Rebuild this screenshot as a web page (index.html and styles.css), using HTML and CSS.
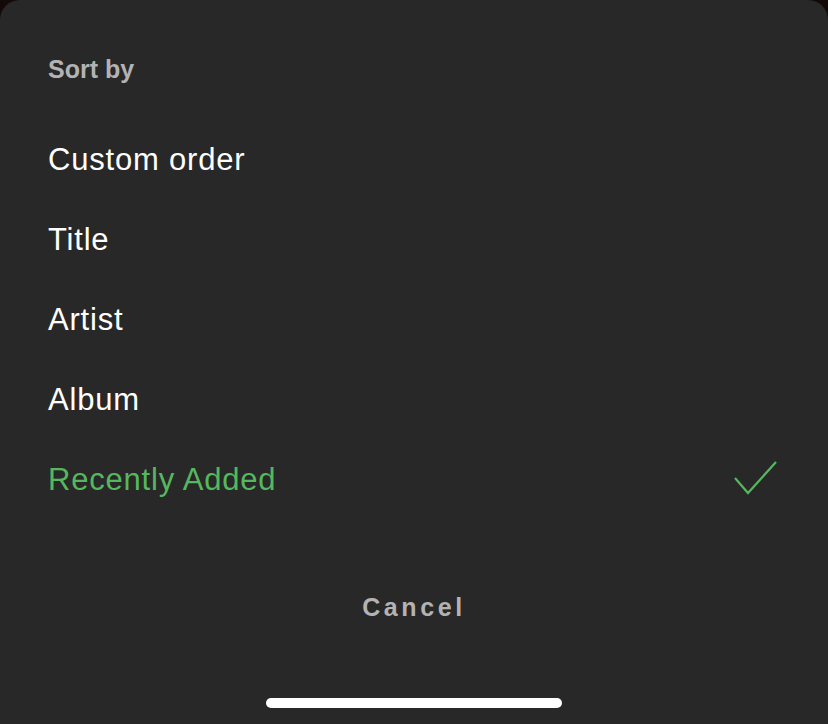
FILE: index.html
```html
<!DOCTYPE html>
<html>
<head>
<meta charset="utf-8">
<link rel="stylesheet" href="styles.css">
</head>
<body>
<div class="sheet">
  <div class="title">Sort by</div>
  <ul class="options">
    <li class="option">Custom order</li>
    <li class="option">Title</li>
    <li class="option">Artist</li>
    <li class="option">Album</li>
    <li class="option selected">
      <span>Recently Added</span>
      <svg class="check" width="44" height="36" viewBox="0 0 44 36"><polyline points="1,17 14,32 42,1" fill="none" stroke="#55b75e" stroke-width="2.2"/></svg>
    </li>
  </ul>
  <div class="cancel">Cancel</div>
  <div class="home"></div>
</div>
</body>
</html>
```
FILE: styles.css
```css
html, body { margin: 0; padding: 0; }
body {
  background: #140909;
  width: 828px;
  height: 724px;
  overflow: hidden;
  font-family: "Liberation Sans", Arial, sans-serif;
}
.sheet {
  background: #282828;
  height: 724px;
  border-radius: 20px 20px 0 0;
  padding: 49px 0 0 0;
  box-sizing: border-box;
  display: flex;
  flex-direction: column;
}
.title {
  padding-left: 48px;
  height: 40px;
  line-height: 40px;
  font-size: 25px;
  font-weight: bold;
  color: #b3b3b3;
  margin-bottom: 31px;
}
.options { list-style: none; margin: 0; padding: 0; }
.option {
  height: 80px;
  display: flex;
  align-items: center;
  justify-content: space-between;
  padding: 0 50px 0 48px;
  font-size: 31px;
  letter-spacing: 0.8px;
  color: #ffffff;
}
.option.selected { color: #55b75e; }
.check { display: block; margin-top: -3px; }
.cancel {
  margin-top: 47px;
  height: 80px;
  line-height: 80px;
  text-align: center;
  font-size: 25px;
  font-weight: bold;
  letter-spacing: 3.6px;
  color: #b3b3b3;
}
.home {
  margin: 51px auto 0;
  width: 296px;
  height: 10px;
  border-radius: 5px;
  background: #ffffff;
}
```
